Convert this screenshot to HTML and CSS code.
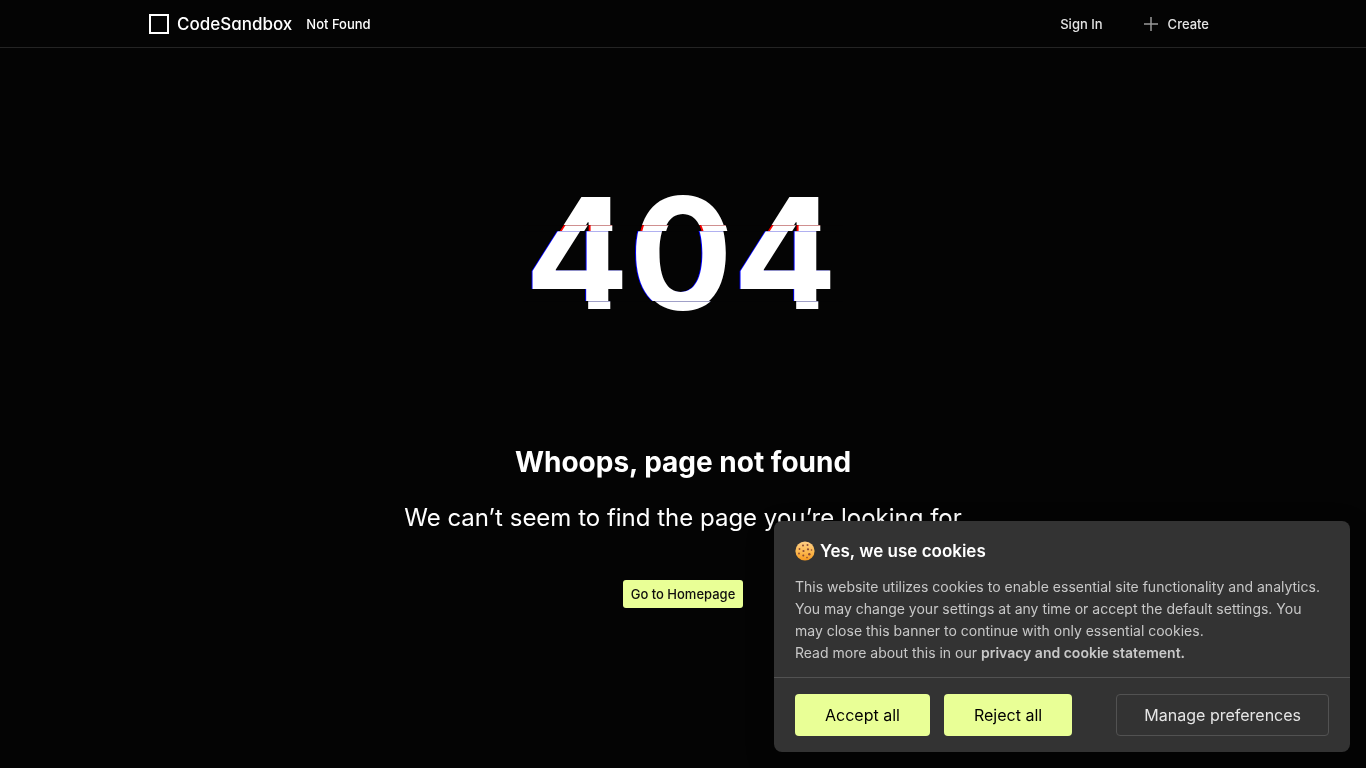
FILE: index.html
```html
<!DOCTYPE html>
<html lang="en">
<head>
<meta charset="utf-8">
<meta name="viewport" content="width=device-width, initial-scale=1">
<title>Not Found - CodeSandbox</title>
<link rel="stylesheet" href="styles.css">
</head>
<body>
<header class="header">
  <nav class="nav">
    <a class="brand" href="#">
      <svg class="brand-mark" viewBox="0 0 20 20" aria-hidden="true"><rect x="1" y="1" width="18" height="18" fill="none" stroke="#fff" stroke-width="2"/></svg>
      <span class="brand-name">CodeSandbox</span>
    </a>
    <span class="page-name">Not Found</span>
    <div class="actions">
      <a class="action" href="#">Sign In</a>
      <button class="action" type="button">
        <svg class="plus" viewBox="0 0 16 16" aria-hidden="true"><path d="M8 1v14M1 8h14" stroke="#999" stroke-width="1.5" fill="none"/></svg>
        Create
      </button>
    </div>
  </nav>
</header>
<main class="main">
  <div class="code" data-text="404">404<span class="code-lines"></span></div>
  <h1 class="title">Whoops, page not found</h1>
  <p class="lead">We can’t seem to find the page you’re looking for</p>
  <a class="home" href="#">Go to Homepage</a>
</main>
<section class="cookies" aria-labelledby="cookies-title">
  <div class="cookies-body">
    <h2 class="cookies-title" id="cookies-title">
      <svg class="cookie" viewBox="0 0 20 20" aria-hidden="true">
        <defs><linearGradient id="dough" x1="0" y1="0" x2="0" y2="1"><stop offset="0" stop-color="#ffcf87"/><stop offset="0.55" stop-color="#fbb84f"/><stop offset="1" stop-color="#f79a20"/></linearGradient></defs>
        <circle cx="10" cy="10" r="9.6" fill="url(#dough)"/>
        <g fill="#8a4a35"><circle cx="8" cy="4.5" r="1"/><circle cx="12.5" cy="4" r="1"/><circle cx="4.5" cy="8" r="0.9"/><circle cx="13" cy="8.3" r="1.1"/><circle cx="16.5" cy="9" r="0.8"/><circle cx="8.5" cy="10" r="1.1"/><circle cx="4" cy="12.5" r="0.9"/><circle cx="8.3" cy="14.5" r="1"/><circle cx="14.3" cy="13.3" r="1.2"/><circle cx="12" cy="16.6" r="0.8"/></g>
      </svg>
      Yes, we use cookies
    </h2>
    <p class="cookies-text">This website utilizes cookies to enable essential site functionality and analytics. You may change your settings at any time or accept the default settings. You may close this banner to continue with only essential cookies.<br>Read more about this in our <a class="cookies-link" href="#">privacy and cookie statement.</a></p>
  </div>
  <div class="cookies-actions">
    <button class="btn" type="button">Accept all</button>
    <button class="btn" type="button">Reject all</button>
    <button class="btn btn-outline" type="button">Manage preferences</button>
  </div>
</section>
</body>
</html>
```
FILE: styles.css
```css
* { box-sizing: border-box; }
body {
  margin: 0;
  min-height: 100vh;
  background: #040404;
  color: #fff;
  font-family: Inter, "Liberation Sans", sans-serif;
  font-size: 13px;
}
a { color: inherit; text-decoration: none; }
button { font-family: inherit; cursor: pointer; }

.header { border-bottom: 1px solid #242424; }
.nav {
  display: flex;
  align-items: center;
  gap: 14px;
  max-width: 1100px;
  height: 47px;
  margin: 0 auto;
  padding: 0 24px 0 16px;
}
.brand { display: flex; align-items: center; gap: 8px; }
.brand-mark { width: 20px; height: 20px; }
.brand-name {
  font-size: 17px;
  font-weight: 500;
  line-height: 20px;
  font-feature-settings: "cv11";
}
.page-name { font-weight: 500; }
.actions { display: flex; align-items: center; gap: 40px; margin-left: auto; }
.action {
  display: flex;
  align-items: center;
  gap: 9px;
  padding: 0;
  border: 0;
  background: none;
  color: #e5e5e5;
  font-size: 13px;
  font-weight: 500;
}
.plus { width: 16px; height: 16px; }

.main { display: flex; flex-direction: column; align-items: center; text-align: center; }
.code {
  position: relative;
  margin-top: 112px;
  font-size: 154px;
  font-weight: 700;
  line-height: 186px;
}
.code::before,
.code::after {
  content: attr(data-text);
  position: absolute;
  top: 0;
  width: 100%;
  background: #040404;
}
.code::before {
  left: -2px;
  text-shadow: -1px 0 #00f;
  clip-path: inset(71px 0 45px -4px);
}
.code::after {
  left: 2px;
  text-shadow: -2px 0 #f00;
  clip-path: inset(65px 0 115px -4px);
}
.code-lines {
  position: absolute;
  inset: 0 -4px;
  z-index: 1;
  background:
    linear-gradient(#d09090, #d09090) 0 65px / 100% 1px no-repeat,
    linear-gradient(#b0b0f0, #b0b0f0) 0 71px / 100% 1px no-repeat,
    linear-gradient(#a0a0c8, #a0a0c8) 0 141px / 100% 1px no-repeat;
  mix-blend-mode: multiply;
}
.title { margin: 98px 0 0; font-size: 28px; font-weight: 700; line-height: 36px; }
.lead { margin: 22px 0 0; font-size: 24px; font-weight: 400; line-height: 32px; }
.home {
  margin-top: 46px;
  padding: 0 8px;
  border-radius: 3px;
  background: #e9ff96;
  color: #0f0e0e;
  font-weight: 500;
  line-height: 28px;
}

.cookies {
  position: fixed;
  z-index: 2;
  right: 16px;
  bottom: 16px;
  width: 576px;
  max-width: calc(100% - 32px);
  border-radius: 8px;
  background: #333;
  box-shadow: 0 10px 28px rgba(2, 2, 3, 0.28);
}
.cookies-body { padding: 18px 20px 13px 21px; }
.cookies-title {
  display: flex;
  align-items: center;
  gap: 5px;
  margin: 0;
  font-size: 17px;
  font-weight: 600;
  line-height: 24px;
}
.cookie { width: 20px; height: 20px; }
.cookies-text { margin: 13px 0 0; color: #c8c8c8; font-size: 14px; line-height: 22px; }
.cookies-link { font-weight: 600; }
.cookies-actions {
  display: flex;
  gap: 14px;
  padding: 16px 21px;
  border-top: 1px solid #525252;
}
.btn {
  height: 42px;
  padding: 0 30px;
  border: 0;
  border-radius: 4px;
  background: #e9ff96;
  color: #000;
  font-size: 16px;
}
.btn-outline {
  margin-left: auto;
  padding: 0 27px;
  border: 1px solid #525252;
  background: transparent;
  color: #e5e5e5;
}
```
